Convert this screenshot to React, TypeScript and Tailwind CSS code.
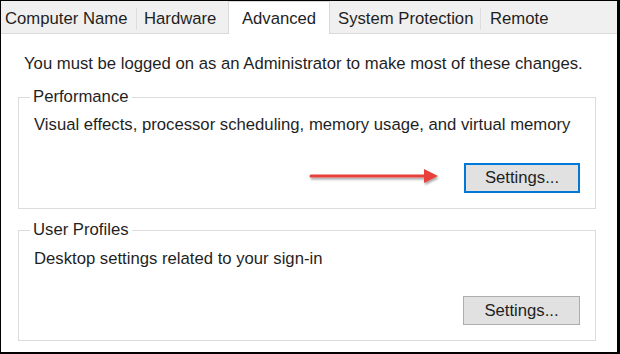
import React from "react";

const font = { fontFamily: '"Liberation Sans", Arial, sans-serif' };
const txt = "text-[16.7px] text-[#1f1f1f]";

export default function App() {
  return (
    <div className="w-[620px] h-[354px] bg-black pt-px pl-px pr-[3px] pb-[2px]" style={font}>
      <div className="w-full h-full bg-white flex flex-col relative overflow-hidden">
        {/* tab strip */}
        <div className="h-[33px] bg-[#f0f0f0] border-b border-[#dadada] flex items-end shrink-0">
          <div className="h-[30px] flex items-center mb-[1px] pt-[3px]">
            <div className={`w-[136px] h-[22px] flex items-center pl-[4px] border-r border-[#dedede] ${txt}`}>Computer Name</div>
            <div className={`w-[91px] h-[22px] flex items-center pl-[7px] ${txt}`}>Hardware</div>
          </div>
          <div className={`w-[102px] h-[33px] -mb-px bg-white border-x border-t border-[#d9d9d9] flex items-center justify-center pt-[1px] relative z-10 ${txt}`}>
            Advanced
          </div>
          <div className="h-[30px] flex items-center mb-[1px] pt-[3px]">
            <div className={`w-[151px] h-[22px] flex items-center pl-[8px] border-r border-[#dedede] ${txt}`}>System Protection</div>
            <div className={`w-[84px] h-[22px] flex items-center pl-[9px] ${txt}`}>Remote</div>
          </div>
        </div>

        {/* content */}
        <div className="flex flex-col pl-[17px] pr-[21px]">
          <div className={`mt-[20px] pl-[6px] h-[20px] leading-[20px] ${txt}`}>
            You must be logged on as an Administrator to make most of these changes.
          </div>

          <fieldset className="mt-[13px] h-[122px] border border-[#dcdcdc] px-[15px]">
            <legend className={`-ml-[4px] px-[3px] h-[20px] leading-[20px] ${txt}`}>Performance</legend>
            <div className={`mt-[8px] h-[20px] leading-[20px] ${txt}`}>
              Visual effects, processor scheduling, memory usage, and virtual memory
            </div>
            <div className="flex justify-end mt-[28px]">
              <button className={`w-[116px] h-[30px] bg-[#e1e1e1] border-2 border-[#0078d7] flex items-center justify-center ${txt}`}>
                Settings...
              </button>
            </div>
          </fieldset>

          <fieldset className="mt-[11px] h-[121px] border border-[#dcdcdc] px-[15px]">
            <legend className={`-ml-[4px] px-[3px] h-[20px] leading-[20px] ${txt}`}>User Profiles</legend>
            <div className={`mt-[9px] h-[20px] leading-[20px] ${txt}`}>
              Desktop settings related to your sign-in
            </div>
            <div className="flex justify-end mt-[27px]">
              <button className={`w-[117px] h-[29px] bg-[#e1e1e1] border border-[#adadad] flex items-center justify-center ${txt}`}>
                Settings...
              </button>
            </div>
          </fieldset>
        </div>

        {/* red arrow overlay */}
        <svg className="absolute left-[306px] top-[165px]" width="136" height="22" viewBox="0 0 136 22">
          <defs>
            <filter id="sh" x="-10%" y="-50%" width="120%" height="200%">
              <feDropShadow dx="1" dy="2" stdDeviation="1.2" floodColor="#000" floodOpacity="0.35" />
            </filter>
          </defs>
          <g filter="url(#sh)">
            <line x1="4" y1="10" x2="120" y2="10" stroke="#e8403a" strokeWidth="3" strokeLinecap="round" />
            <polygon points="117,3 131,10 117,17" fill="#e8403a" />
          </g>
        </svg>
      </div>
    </div>
  );
}
